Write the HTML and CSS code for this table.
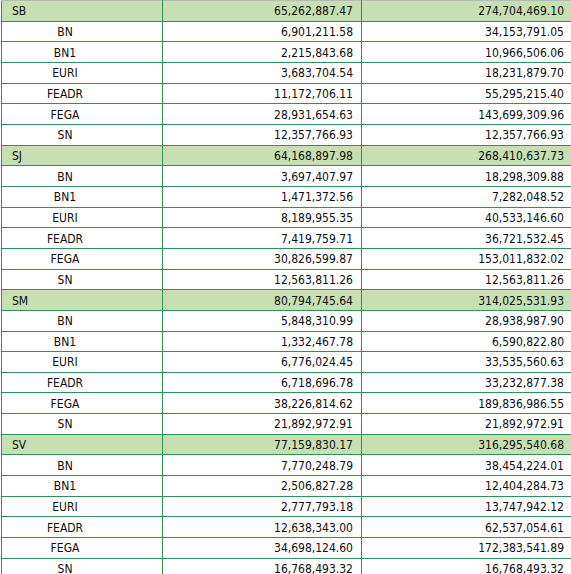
FILE: index.html
```html
<!DOCTYPE html>
<html>
<head>
<meta charset="utf-8">
<link rel="stylesheet" href="styles.css">
</head>
<body>
<div class="wrap">
<table class="grid">
<colgroup><col class="c1"><col class="c2"><col class="c3"></colgroup>
<tbody>
<tr class="grp"><td class="code">SB</td><td class="num">65,262,887.47</td><td class="num">274,704,469.10</td></tr>
<tr><td class="sub">BN</td><td class="num">6,901,211.58</td><td class="num">34,153,791.05</td></tr>
<tr><td class="sub">BN1</td><td class="num">2,215,843.68</td><td class="num">10,966,506.06</td></tr>
<tr><td class="sub">EURI</td><td class="num">3,683,704.54</td><td class="num">18,231,879.70</td></tr>
<tr><td class="sub">FEADR</td><td class="num">11,172,706.11</td><td class="num">55,295,215.40</td></tr>
<tr><td class="sub">FEGA</td><td class="num">28,931,654.63</td><td class="num">143,699,309.96</td></tr>
<tr><td class="sub">SN</td><td class="num">12,357,766.93</td><td class="num">12,357,766.93</td></tr>
<tr class="grp"><td class="code">SJ</td><td class="num">64,168,897.98</td><td class="num">268,410,637.73</td></tr>
<tr><td class="sub">BN</td><td class="num">3,697,407.97</td><td class="num">18,298,309.88</td></tr>
<tr><td class="sub">BN1</td><td class="num">1,471,372.56</td><td class="num">7,282,048.52</td></tr>
<tr><td class="sub">EURI</td><td class="num">8,189,955.35</td><td class="num">40,533,146.60</td></tr>
<tr><td class="sub">FEADR</td><td class="num">7,419,759.71</td><td class="num">36,721,532.45</td></tr>
<tr><td class="sub">FEGA</td><td class="num">30,826,599.87</td><td class="num">153,011,832.02</td></tr>
<tr><td class="sub">SN</td><td class="num">12,563,811.26</td><td class="num">12,563,811.26</td></tr>
<tr class="grp"><td class="code">SM</td><td class="num">80,794,745.64</td><td class="num">314,025,531.93</td></tr>
<tr><td class="sub">BN</td><td class="num">5,848,310.99</td><td class="num">28,938,987.90</td></tr>
<tr><td class="sub">BN1</td><td class="num">1,332,467.78</td><td class="num">6,590,822.80</td></tr>
<tr><td class="sub">EURI</td><td class="num">6,776,024.45</td><td class="num">33,535,560.63</td></tr>
<tr><td class="sub">FEADR</td><td class="num">6,718,696.78</td><td class="num">33,232,877.38</td></tr>
<tr><td class="sub">FEGA</td><td class="num">38,226,814.62</td><td class="num">189,836,986.55</td></tr>
<tr><td class="sub">SN</td><td class="num">21,892,972.91</td><td class="num">21,892,972.91</td></tr>
<tr class="grp"><td class="code">SV</td><td class="num">77,159,830.17</td><td class="num">316,295,540.68</td></tr>
<tr><td class="sub">BN</td><td class="num">7,770,248.79</td><td class="num">38,454,224.01</td></tr>
<tr><td class="sub">BN1</td><td class="num">2,506,827.28</td><td class="num">12,404,284.73</td></tr>
<tr><td class="sub">EURI</td><td class="num">2,777,793.18</td><td class="num">13,747,942.12</td></tr>
<tr><td class="sub">FEADR</td><td class="num">12,638,343.00</td><td class="num">62,537,054.61</td></tr>
<tr><td class="sub">FEGA</td><td class="num">34,698,124.60</td><td class="num">172,383,541.89</td></tr>
<tr><td class="sub">SN</td><td class="num">16,768,493.32</td><td class="num">16,768,493.32</td></tr>
</tbody>
</table>
</div>
</body>
</html>
```
FILE: styles.css
```css
html, body {
  margin: 0;
  padding: 0;
  background: #ffffff;
}
.wrap {
  padding-left: 1px;
  width: 580px;
}
.grid {
  border-collapse: collapse;
  table-layout: fixed;
  width: 574px;
  font-family: "DejaVu Sans Condensed", "DejaVu Sans", sans-serif;
  font-stretch: condensed;
  font-size: 12px;
  color: #0d0d0d;
}
.c1 { width: 161px; }
.c2 { width: 199px; }
.c3 { width: 213px; }
.grid tr {
  height: 20.667px;
}
.grid td {
  border: 1px solid #2f9158;
  padding: 1px 0 0 0;
  white-space: nowrap;
  vertical-align: middle;
  line-height: 14px;
}
.grid tr:first-child td {
  border-top-color: #b8b8b8;
}
.grp td {
  background: #c6e0b4;
}
.grid td.code {
  text-align: left;
  padding-left: 10px;
}
.grid td.sub {
  text-align: center;
  padding-left: 8px;
  padding-right: 42px;
}
.grid td.num {
  text-align: right;
  padding-right: 8px;
}
.grid td.num:last-child {
  padding-right: 10px;
}
```
